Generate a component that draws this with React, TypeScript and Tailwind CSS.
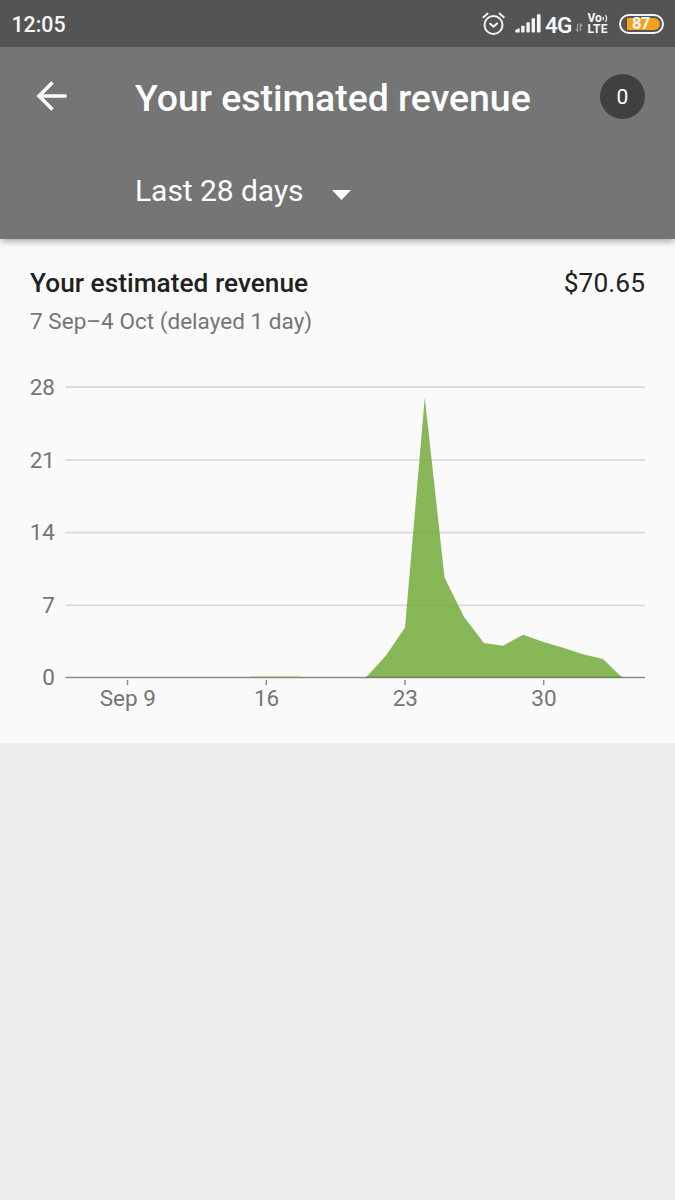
const X0 = 65.5;
const X1 = 645;
const BASELINE = 307.5;

const gridLines = [
  { label: "28", y: 17 },
  { label: "21", y: 90 },
  { label: "14", y: 162.5 },
  { label: "7", y: 235.2 },
];

const ticks = [
  { label: "Sep 9", x: 127.5 },
  { label: "16", x: 266.3 },
  { label: "23", x: 405 },
  { label: "30", x: 543.7 },
];

const areaPoints =
  "366,307.5 386,285.5 405,257.5 424.8,27.5 444.5,207.5 464,247 484,273 503,275.8 523,264.8 543.7,272 563,277.8 583,284.3 603,289 622,307.5";

function AlarmIcon() {
  return (
    <svg width="24" height="24" viewBox="0 0 24 24" fill="none" stroke="#f4f4f4" strokeWidth="2" strokeLinecap="round">
      <circle cx="11.5" cy="13" r="9" />
      <path d="M1.4 5.2 5.6 1.6M21.8 5.2 17.6 1.6" />
      <path d="m8.2 11.8 3.3 2.8 3.6-3.2" />
    </svg>
  );
}

function SignalIcon() {
  return (
    <svg width="27" height="19" viewBox="0 0 27 19" fill="#f4f4f4">
      <path d="M0.3 18.5v-2.6l4.4-1.8v4.4z" />
      <rect x="6.2" y="11.8" width="3.4" height="6.7" rx="0.8" />
      <rect x="11.4" y="8.3" width="3.4" height="10.2" rx="0.8" />
      <rect x="16.6" y="4.3" width="3.4" height="14.2" rx="0.8" />
      <rect x="21.9" y="0.3" width="3.7" height="18.2" rx="0.8" />
    </svg>
  );
}

function DataArrows() {
  return (
    <svg width="8" height="9" viewBox="0 0 8 9" fill="none" stroke="#a3a3a3" strokeWidth="1.2">
      <path d="M2.6 0.8V8L0.6 5.8M5.4 8.2V1L7.4 3.2" />
    </svg>
  );
}

function StatusBar() {
  return (
    <div className="flex h-[47px] items-center justify-between bg-[#545454] pr-[11px] pl-[11.5px] text-[#f8f8f8]">
      <span className="pt-[2px] text-[21.3px] leading-[26px] font-medium">12:05</span>
      <div className="flex items-center">
        <AlarmIcon />
        <span className="ml-[9px]"><SignalIcon /></span>
        <span className="ml-[3.5px] pt-[3px] text-[22.5px] leading-[26px] font-semibold tracking-[-0.9px]">4G</span>
        <span className="ml-[3px] pt-[8px]"><DataArrows /></span>
        <div className="ml-[5px] flex w-[23px] flex-col pt-px text-[12px] font-bold">
          <span className="flex h-[11px] items-center leading-[11px]">
            Vo
            <svg width="7" height="9" viewBox="0 0 7 9" fill="none" stroke="#f4f4f4" strokeWidth="1.1">
              <path d="M0.8 2.8q1.6 1.7 0 3.4M3.4 1.2q2.6 3.3 0 6.6" />
            </svg>
          </span>
          <span className="h-[11px] leading-[11px] tracking-[0.3px]">LTE</span>
        </div>
        <div className="ml-[8.5px] flex h-[20px] w-[45px] rounded-full border-2 border-[#f4f4f4] p-[2px]">
          <div className="ml-[4px] flex flex-1 items-center rounded-r-full bg-[#f5a11f] pt-px pl-[5px] text-[16.5px] leading-none font-bold tracking-[-0.6px]">87</div>
        </div>
      </div>
    </div>
  );
}

function Header() {
  return (
    <header className="relative h-[192px] bg-[#757575] text-white shadow-[0_4px_6px_-1px_rgba(0,0,0,0.3)]">
      <div className="flex h-[98px] items-center pr-[30px] pl-[36px]">
        <svg className="shrink-0" width="31" height="30" viewBox="0 0 31 30" fill="none" stroke="#fafafa" strokeWidth="3.6">
          <path d="M30.5 15H3M16.5 1.5 3 15l13.5 13.5" />
        </svg>
        <h1 className="ml-[68px] flex-1 pt-[4px] text-[37.5px] leading-[44px] font-medium tracking-[-0.05px] whitespace-nowrap">
          Your estimated revenue
        </h1>
        <div className="mt-px flex size-[45px] items-center justify-center rounded-full bg-[#404040] pt-[2px] text-[21px]">0</div>
      </div>
      <div className="flex h-[92px] items-center pl-[135px]">
        <span className="text-[30px] leading-[36px] tracking-[-0.05px]">Last 28 days</span>
        <svg className="mt-[7px] ml-[28.5px]" width="19" height="10" viewBox="0 0 19 10" fill="#fff">
          <path d="M0 0h19L9.5 10z" />
        </svg>
      </div>
    </header>
  );
}

function RevenueChart() {
  return (
    <svg className="block" width="675" height="373" viewBox="0 0 675 373" fontSize="22.5" fill="#757575">
      {gridLines.map((g) => (
        <g key={g.label}>
          <text x="55" y={g.y + 7.6} textAnchor="end">{g.label}</text>
          <line x1={X0} x2={X1} y1={g.y + 0.2} y2={g.y + 0.2} stroke="#d9d9d9" strokeWidth="1.7" />
        </g>
      ))}
      <text x="55" y="315" textAnchor="end">0</text>
      <polygon points={areaPoints} fill="#6aa62e" fillOpacity="0.8" />
      <line x1={X0} x2={X1} y1={BASELINE} y2={BASELINE} stroke="#8b8b8b" strokeWidth="1.7" />
      <path d="M250 307.2H300" stroke="#75a04c" strokeWidth="1" />
      <path d="M366 307.2H622" stroke="#6f8c55" strokeWidth="1.4" />
      {ticks.map((t) => (
        <g key={t.label}>
          <line x1={t.x} x2={t.x} y1="310" y2="315" stroke="#8b8b8b" strokeWidth="1.5" />
          <text x={t.x + 0.3} y="336" textAnchor="middle">{t.label}</text>
        </g>
      ))}
    </svg>
  );
}

export default function App() {
  return (
    <div className="min-h-[1200px] w-[675px] overflow-hidden bg-[#eeeeee] font-['Roboto',sans-serif]">
      <StatusBar />
      <Header />
      <main className="h-[504px] bg-[#fafafa]">
        <div className="h-[131px] px-[30px] pt-[28px]">
          <div className="flex justify-between text-[26.25px] leading-[32px] text-[#212121]">
            <h2 className="font-medium tracking-[0.02px]">Your estimated revenue</h2>
            <span className="tracking-[0.1px]">$70.65</span>
          </div>
          <p className="mt-[8px] text-[22.5px] leading-[28px] tracking-[0.03px] text-[#757575]">7 Sep–4 Oct (delayed 1 day)</p>
        </div>
        <RevenueChart />
      </main>
    </div>
  );
}
